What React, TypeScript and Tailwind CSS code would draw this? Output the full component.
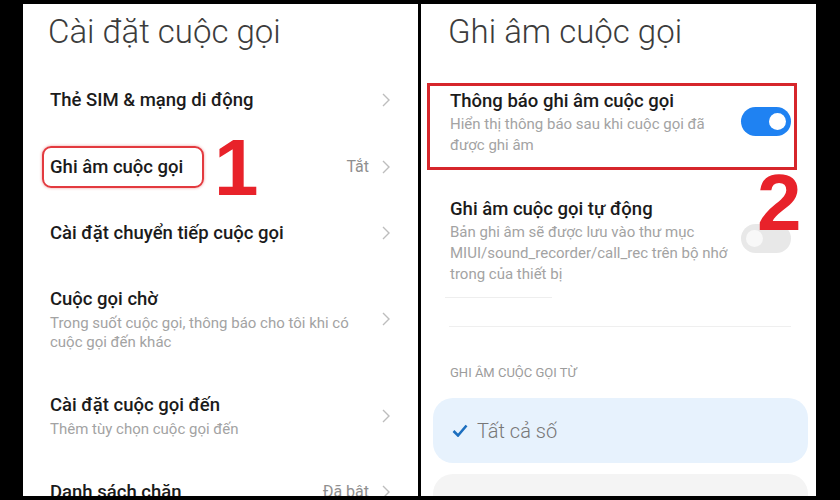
import type { ReactNode } from "react";

const FONT = { fontFamily: "Roboto, 'Noto Sans', sans-serif" };

function Chevron() {
  return (
    <svg width="8" height="14" viewBox="0 0 8 14" className="shrink-0">
      <polyline points="1,1 7,7 1,13" fill="none" stroke="#bdbdbd" strokeWidth="1.4" />
    </svg>
  );
}

function Toggle({ on }: { on: boolean }) {
  return (
    <div
      className={
        on
          ? "flex h-[29px] w-[50px] shrink-0 items-center justify-end rounded-full bg-[#1f82f2] pr-[5px]"
          : "flex h-[29px] w-[50px] shrink-0 items-center justify-start rounded-full bg-[#e8e8e8] pl-[5px]"
      }
    >
      <div className={on ? "h-[17px] w-[17px] rounded-full bg-white" : "h-[17px] w-[17px] rounded-full bg-[#f8f8f8]"} />
    </div>
  );
}

function Row({
  title,
  sub,
  value,
  className,
}: {
  title: string;
  sub?: ReactNode;
  value?: string;
  className: string;
}) {
  return (
    <div className={`flex items-center justify-between pl-[27px] pr-[28px] ${className}`}>
      <div className="flex flex-col">
        <span className="text-[18.5px] font-medium leading-[24px] text-[#1b1b1b]">{title}</span>
        {sub && <span className="mt-[3px] text-[15px] leading-[19px] text-[#a3a3a3]">{sub}</span>}
      </div>
      <div className="flex items-center gap-[13px]">
        {value && <span className="text-[16px] text-[#8f8f8f]">{value}</span>}
        <Chevron />
      </div>
    </div>
  );
}

function CallSettings() {
  return (
    <div className="relative h-[492px] w-[395px] overflow-hidden bg-white">
      <div className="h-[62px] pl-[25px] pt-[8px]">
        <h1 className="text-[33px] font-light leading-[40px] text-[#3c3c3c]">Cài đặt cuộc gọi</h1>
      </div>
      <Row title="Thẻ SIM & mạng di động" className="h-[68px]" />
      <Row title="Ghi âm cuộc gọi" value="Tắt" className="h-[66px]" />
      <Row title="Cài đặt chuyển tiếp cuộc gọi" className="h-[66px]" />
      <Row
        title="Cuộc gọi chờ"
        sub={
          <>
            Trong suốt cuộc gọi, thông báo cho tôi khi có
            <br />
            cuộc gọi đến khác
          </>
        }
        className="h-[106px]"
      />
      <Row title="Cài đặt cuộc gọi đến" sub="Thêm tùy chọn cuộc gọi đến" className="h-[88px]" />
      <Row title="Danh sách chặn" value="Đã bật" className="h-[64px]" />

      {/* annotations */}
      <div className="absolute left-[19px] top-[142px] h-[42px] w-[162px] rounded-[9px] border-2 border-[#e33a3f] shadow-[0_0_3px_rgba(220,30,30,0.45)]" />
      <span
        className="absolute left-[191px] top-[124px] text-[80px] font-bold leading-none text-[#e8222a]"
        style={{ fontFamily: "'Liberation Sans', Arial, sans-serif" }}
      >
        1
      </span>
    </div>
  );
}

function RecordSettings() {
  return (
    <div className="relative h-[492px] w-[395px] overflow-hidden bg-white">
      <div className="h-[79px] pl-[27px] pt-[8px]">
        <h1 className="text-[33px] font-light leading-[40px] text-[#3c3c3c]">Ghi âm cuộc gọi</h1>
      </div>

      <div className="flex h-[87px] items-start justify-between pl-[29px] pr-[25px]">
        <div className="flex flex-col pt-[6px]">
          <span className="text-[18.5px] font-medium leading-[24px] text-[#1b1b1b]">Thông báo ghi âm cuộc gọi</span>
          <span className="mt-[1px] text-[15px] leading-[21px] text-[#a3a3a3]">
            Hiển thị thông báo sau khi cuộc gọi đã
            <br />
            được ghi âm
          </span>
        </div>
        <div className="mt-[24px]">
          <Toggle on />
        </div>
      </div>

      <div className="flex items-start justify-between pl-[29px] pr-[25px]">
        <div className="flex flex-col pt-[27px]">
          <span className="text-[18.5px] font-medium leading-[24px] text-[#1b1b1b]">Ghi âm cuộc gọi tự động</span>
          <span className="mt-[1px] text-[15px] leading-[21px] text-[#a3a3a3]">
            Bản ghi âm sẽ được lưu vào thư mục
            <br />
            MIUI/sound_recorder/call_rec trên bộ nhớ
            <br />
            trong của thiết bị
          </span>
        </div>
        <div className="mt-[54px]">
          <Toggle on={false} />
        </div>
      </div>

      <div className="ml-[24px] mt-[12px] h-px w-[107px] bg-[#eeeeee]" />
      <div className="ml-[28px] mt-[28px] h-px w-[342px] bg-[#efefef]" />

      <div className="pl-[29px] pt-[38px] text-[13px] leading-[16px] text-[#9c9c9c]">GHI ÂM CUỘC GỌI TỪ</div>

      <div className="ml-[12px] mt-[17px] flex h-[65px] w-[375px] items-center gap-[9px] rounded-[20px] bg-[#e7f2fd] pl-[19px]">
        <svg width="16" height="13" viewBox="0 0 16 13">
          <polyline points="1.5,7 6,11.5 14.5,1.5" fill="none" stroke="#1d6fbf" strokeWidth="2.6" />
        </svg>
        <span className="text-[20px] font-light text-[#777777]">Tất cả số</span>
      </div>
      <div className="ml-[12px] mt-[11px] h-[60px] w-[375px] rounded-[20px] bg-[#f4f4f4]" />

      {/* annotations */}
      <div className="absolute left-[6px] top-[79px] h-[87px] w-[370px] border-[3px] border-[#d6262b]" />
      <span
        className="absolute left-[336px] top-[159px] text-[80px] font-bold leading-none text-[#e8222a]"
        style={{ fontFamily: "'Liberation Sans', Arial, sans-serif" }}
      >
        2
      </span>
    </div>
  );
}

export default function App() {
  return (
    <div className="flex h-[500px] w-[840px] gap-[3px] bg-black pl-[23px] pt-[4px]" style={FONT}>
      <CallSettings />
      <RecordSettings />
    </div>
  );
}
